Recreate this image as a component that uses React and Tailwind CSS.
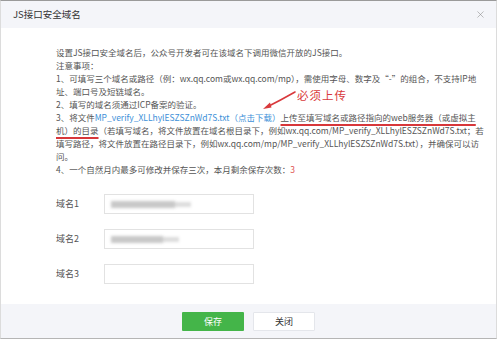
import { X } from "lucide-react";

const font = { fontFamily: '"Noto Sans CJK SC", "Noto Sans", sans-serif' };

function Field({ label, blur }) {
  return (
    <div className="flex items-center h-5">
      <div className="w-12 text-[9px] text-[#555]">{label}</div>
      <div className="relative w-[150px] h-5 border border-[#e2e2e2] bg-white flex items-center px-1.5">
        {blur && (
          <div className="flex items-center blur-[1.5px]">
            <div className={`h-[7px] bg-[#c8c8c8] ${blur}`} />
            <div className="h-[5px] w-4 bg-[#dcdcdc]" />
          </div>
        )}
      </div>
    </div>
  );
}

export default function App() {
  const ul = "underline decoration-[#d7373a] decoration-[1.5px] underline-offset-[3px]";
  return (
    <div className="w-[500px] h-[340px] bg-white" style={font}>
      <div className="w-[497px] h-[339px] border-t border-t-[#9a9a9a] border-x border-x-[#dcdcdc] border-b border-b-[#b5b5b5] flex flex-col">
        <div className="h-[27px] bg-[#f4f5f9] flex items-center justify-between pl-3 pr-2.5">
          <span className="text-[9.5px] text-[#333]">JS接口安全域名</span>
          <X size={11} strokeWidth={1.2} className="text-[#888]" />
        </div>

        <div className="relative flex-1 pl-[55px] pt-[18px]">
          <div className="text-[8.5px] leading-[13px] text-[#555] whitespace-nowrap">
            <div>设置JS接口安全域名后，公众号开发者可在该域名下调用微信开放的JS接口。</div>
            <div>注意事项：</div>
            <div>1、可填写三个域名或路径（例：wx.qq.com或wx.qq.com/mp），需使用字母、数字及“-”的组合，不支持IP地</div>
            <div>址、端口号及短链域名。</div>
            <div>2、填写的域名须通过ICP备案的验证。</div>
            <div>
              3、将文件<span className="text-[#3d8fd8]">MP_verify_XLLhylESZSZnWd7S.txt（点击下载）</span>
              <span className={ul}>上传至填写域名或路径指向的web服务器（或虚拟主</span>
            </div>
            <div>
              <span className={ul}>机）的目录</span>（若填写域名，将文件放置在域名根目录下，例如wx.qq.com/MP_verify_XLLhylESZSZnWd7S.txt；若
            </div>
            <div>填写路径，将文件放置在路径目录下，例如wx.qq.com/mp/MP_verify_XLLhylESZSZnWd7S.txt），并确保可以访</div>
            <div>问。</div>
            <div>
              4、一个自然月内最多可修改并保存三次，本月剩余保存次数：<span className="text-[#e05555]">3</span>
            </div>
          </div>

          <div className="mt-[18px] flex flex-col gap-[15px]">
            <Field label="域名1" blur="w-[64px]" />
            <Field label="域名2" blur="w-[52px]" />
            <Field label="域名3" />
          </div>

          <div
            className="absolute left-[296px] top-[60px] text-[11.5px] text-[#d9393c] tracking-[1px]"
            style={{ fontFamily: '"Liberation Serif", "Noto Sans CJK SC", serif' }}
          >
            必须上传
          </div>
          <svg className="absolute left-[258px] top-[62px]" width="40" height="22" viewBox="0 0 40 22">
            <path d="M36 2 Q22 10 8 17" stroke="#d9393c" strokeWidth="1.6" fill="none" strokeLinecap="round" />
            <path d="M4 19 L11 12.5 L12.5 17.5 Z" fill="#d9393c" />
          </svg>
        </div>

        <div className="h-[34px] bg-[#f4f5f9] flex items-center justify-center gap-[9px] pt-px">
          <button className="w-[62px] h-[19px] bg-[#44b549] text-white text-[9px] rounded-[1px]">保存</button>
          <button className="w-[62px] h-[19px] bg-white border border-[#e4e6eb] text-[#333] text-[9px] rounded-[1px]">关闭</button>
        </div>
      </div>
    </div>
  );
}
